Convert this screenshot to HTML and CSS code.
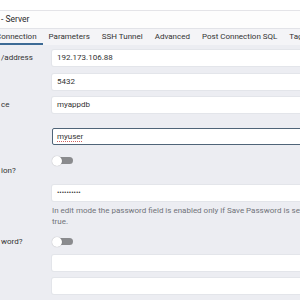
FILE: index.html
```html
<!DOCTYPE html>
<html>
<head>
    <title>Register - Server</title>
    <link rel="stylesheet" href="styles.css">
</head>
<body>
    <div class="topbar"></div>
    <div class="title">- Server</div>
    <div class="tabs">
        <div class="tab active">Connection</div>
        <div class="tab">Parameters</div>
        <div class="tab">SSH Tunnel</div>
        <div class="tab">Advanced</div>
        <div class="tab">Post Connection SQL</div>
        <div class="tab">Tags</div>
    </div>

    <div class="form">
        <div class="row r1">
            <div class="label">/address</div>
            <div class="input">192.173.106.88</div>
        </div>
        <div class="row r2">
            <div class="label"></div>
            <div class="input">5432</div>
        </div>
        <div class="row r3">
            <div class="label">ce</div>
            <div class="input">myappdb</div>
        </div>
        <div class="row r4">
            <div class="label"></div>
            <div class="input focus"><span class="spell">myuser</span></div>
        </div>
        <div class="row r5">
            <div class="label low">ion?</div>
            <div class="control">
                <div class="switch"><span class="knob"></span></div>
            </div>
        </div>
        <div class="row r6">
            <div class="label"></div>
            <div class="control">
                <div class="input dots">••••••••••</div>
                <div class="help">In edit mode the password field is enabled only if Save Password is set to true.</div>
            </div>
        </div>
        <div class="row r7">
            <div class="label mid">word?</div>
            <div class="control">
                <div class="switch"><span class="knob"></span></div>
            </div>
        </div>
        <div class="row r8">
            <div class="label"></div>
            <div class="input"></div>
        </div>
        <div class="row r9">
            <div class="label"></div>
            <div class="input"></div>
        </div>
    </div>
</body>
</html>
```

FILE: styles.css
```css
body {
    margin: 0;
    padding: 0;
    width: 300px;
    height: 300px;
    overflow: hidden;
    background-color: #ecedf2;
    font-family: Roboto, "Liberation Sans", Arial, sans-serif;
    font-size: 8px;
    color: #2a2a2a;
}

.topbar {
    height: 10px;
    background-color: #fff;
    border-bottom: 1px solid #e4e4e8;
}

.title {
    height: 17px;
    line-height: 17px;
    background-color: #fdfdfd;
    border-bottom: 1px solid #e2e3e8;
    padding-left: 1px;
    font-size: 8.5px;
}

.tabs {
    display: flex;
    width: 420px;
    height: 16px;
    margin-left: -8px;
    background-color: #f4f4f7;
}

.tab {
    padding: 0 6px;
    line-height: 15px;
    border-bottom: 2px solid transparent;
    white-space: nowrap;
    color: #333;
}

.tab.active {
    padding-left: 4px;
    border-bottom-color: #3c6a95;
}

.form {
    width: 420px;
    padding-top: 5px;
}

.row {
    display: flex;
}

.label {
    width: 52px;
    flex: none;
    padding-left: 1px;
    box-sizing: border-box;
    line-height: 16px;
    color: #333;
}

.label.low {
    padding-top: 11px;
    line-height: 10px;
}

.label.mid {
    line-height: 11px;
}

.control {
    flex: 1;
}

.input {
    flex: 1;
    height: 16px;
    line-height: 16px;
    padding-left: 5px;
    background-color: #fff;
    border-radius: 2px;
    box-shadow: 0 0 0 1px #e3e5ea;
    color: #333;
}

.input.focus {
    height: 15px;
    line-height: 15px;
    padding-left: 4px;
    border: 1px solid #4f6478;
    box-shadow: none;
}

.spell {
    text-decoration: underline dotted #d06060;
    text-underline-offset: 2px;
}

.input.dots {
    font-size: 7px;
}

.help {
    width: 268px;
    margin-top: 4px;
    line-height: 11px;
    color: #707379;
}

.switch {
    position: relative;
    width: 21px;
    height: 9px;
    margin-top: 1px;
}

.switch::before {
    content: "";
    position: absolute;
    left: 3px;
    top: 1px;
    width: 18px;
    height: 7px;
    border-radius: 4px;
    background-color: #8a8b8e;
}

.knob {
    position: absolute;
    left: 0;
    top: -0.5px;
    width: 10px;
    height: 10px;
    border-radius: 50%;
    background-color: #fff;
    box-shadow: 0 0 1px rgba(0, 0, 0, 0.35);
}

.r1 { margin-bottom: 8px; }
.r2 { margin-bottom: 7px; }
.r3 { margin-bottom: 15px; }
.r4 { margin-bottom: 10px; }
.r5 { height: 30px; }
.r6 { margin-bottom: 9px; }
.r7 { height: 10px; margin-bottom: 9px; }
.r8 { margin-bottom: 7px; }
```
